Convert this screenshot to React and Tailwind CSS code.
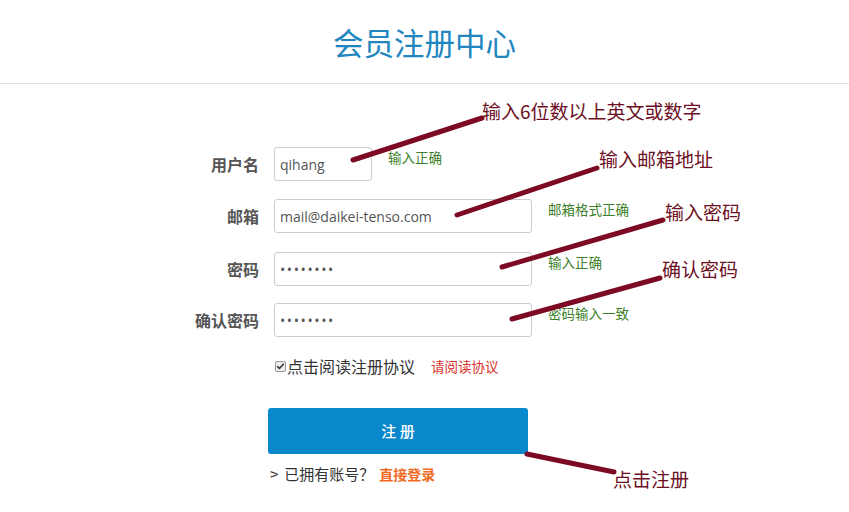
import { Check } from 'lucide-react'

const CJK = "font-['Noto_Sans_CJK_SC',sans-serif]"

const NOTES = [
  { text: '输入6位数以上英文或数字', left: 482, top: 99, line: [353, 160, 482, 118] },
  { text: '输入邮箱地址', left: 599, top: 147, line: [457, 215, 597, 168] },
  { text: '输入密码', left: 665, top: 200, line: [502, 267, 663, 220] },
  { text: '确认密码', left: 662, top: 257, line: [512, 319, 660, 278] },
  { text: '点击注册', left: 613, top: 467, line: [527, 454, 614, 472] },
]

function Row({ label, value, width, status, secret, className = '' }) {
  return (
    <div className={`flex items-center ${className}`}>
      <div className="w-[259px] text-right text-[16px] font-bold text-[#555] leading-[34px]">{label}</div>
      <input
        readOnly
        value={value}
        className={`ml-[15px] h-[34px] ${width} border border-[#ccc] rounded-[3px] pl-[5px] text-[14px] text-[#555] font-['Open_Sans','Noto_Sans_CJK_SC',sans-serif] outline-none ${secret ? 'tracking-[1.6px]' : ''}`}
      />
      <div className="self-start ml-[16px] text-[13.5px] leading-[21px] text-[#3d7f2b]">{status}</div>
    </div>
  )
}

export default function App() {
  return (
    <div className={`relative w-[849px] h-[512px] bg-white overflow-hidden ${CJK}`}>
      <header className="h-[84px] flex items-center justify-center border-b border-[#e0e0e0]">
        <h1 className="text-[30.5px] text-[#2186c0] leading-none pt-[2px]">会员注册中心</h1>
      </header>

      <form className="pt-[63px]">
        <Row label="用户名" value="qihang" width="w-[98px]" status="输入正确" />
        <Row className="mt-[18px]" label="邮箱" value="mail@daikei-tenso.com" width="w-[258px]" status="邮箱格式正确" />
        <Row className="mt-[19px]" label="密码" value="••••••••" secret width="w-[258px]" status="输入正确" />
        <Row className="mt-[17px]" label="确认密码" value="••••••••" secret width="w-[258px]" status="密码输入一致" />

        <div className="mt-[18px] ml-[275px] flex items-center h-[22px]">
          <span className="w-[11px] h-[11px] border border-[#999] bg-[#eee] rounded-[2px] flex items-center justify-center">
            <Check size={9} strokeWidth={4} className="text-[#333]" />
          </span>
          <span className="ml-[1px] text-[16px] text-[#333]">点击阅读注册协议</span>
          <span className="ml-[16px] text-[13.5px] text-[#d9342b]">请阅读协议</span>
        </div>

        <button
          type="button"
          className="mt-[31px] ml-[268px] w-[260px] h-[46px] bg-[#0a88cc] rounded-[3px] text-white text-[15px] font-medium"
        >
          注 册
        </button>

        <div className="mt-[9px] ml-[270px] h-[22px] flex items-center text-[15px] text-[#333]">
          <span>&gt;</span>
          <span className="ml-[6px]">已拥有账号？</span>
          <a className="ml-[5px] text-[14px] font-bold text-[#f06a1f]">直接登录</a>
        </div>
      </form>

      <svg className="absolute inset-0 pointer-events-none" width="849" height="512">
        {NOTES.map((n) => (
          <line
            key={n.text}
            x1={n.line[0]}
            y1={n.line[1]}
            x2={n.line[2]}
            y2={n.line[3]}
            stroke="#7d0a24"
            strokeWidth="5"
            strokeLinecap="round"
          />
        ))}
      </svg>
      {NOTES.map((n) => (
        <div
          key={n.text}
          className="absolute text-[19px] leading-[24px] text-[#6e1024] whitespace-nowrap"
          style={{ left: n.left, top: n.top }}
        >
          {n.text}
        </div>
      ))}
    </div>
  )
}
